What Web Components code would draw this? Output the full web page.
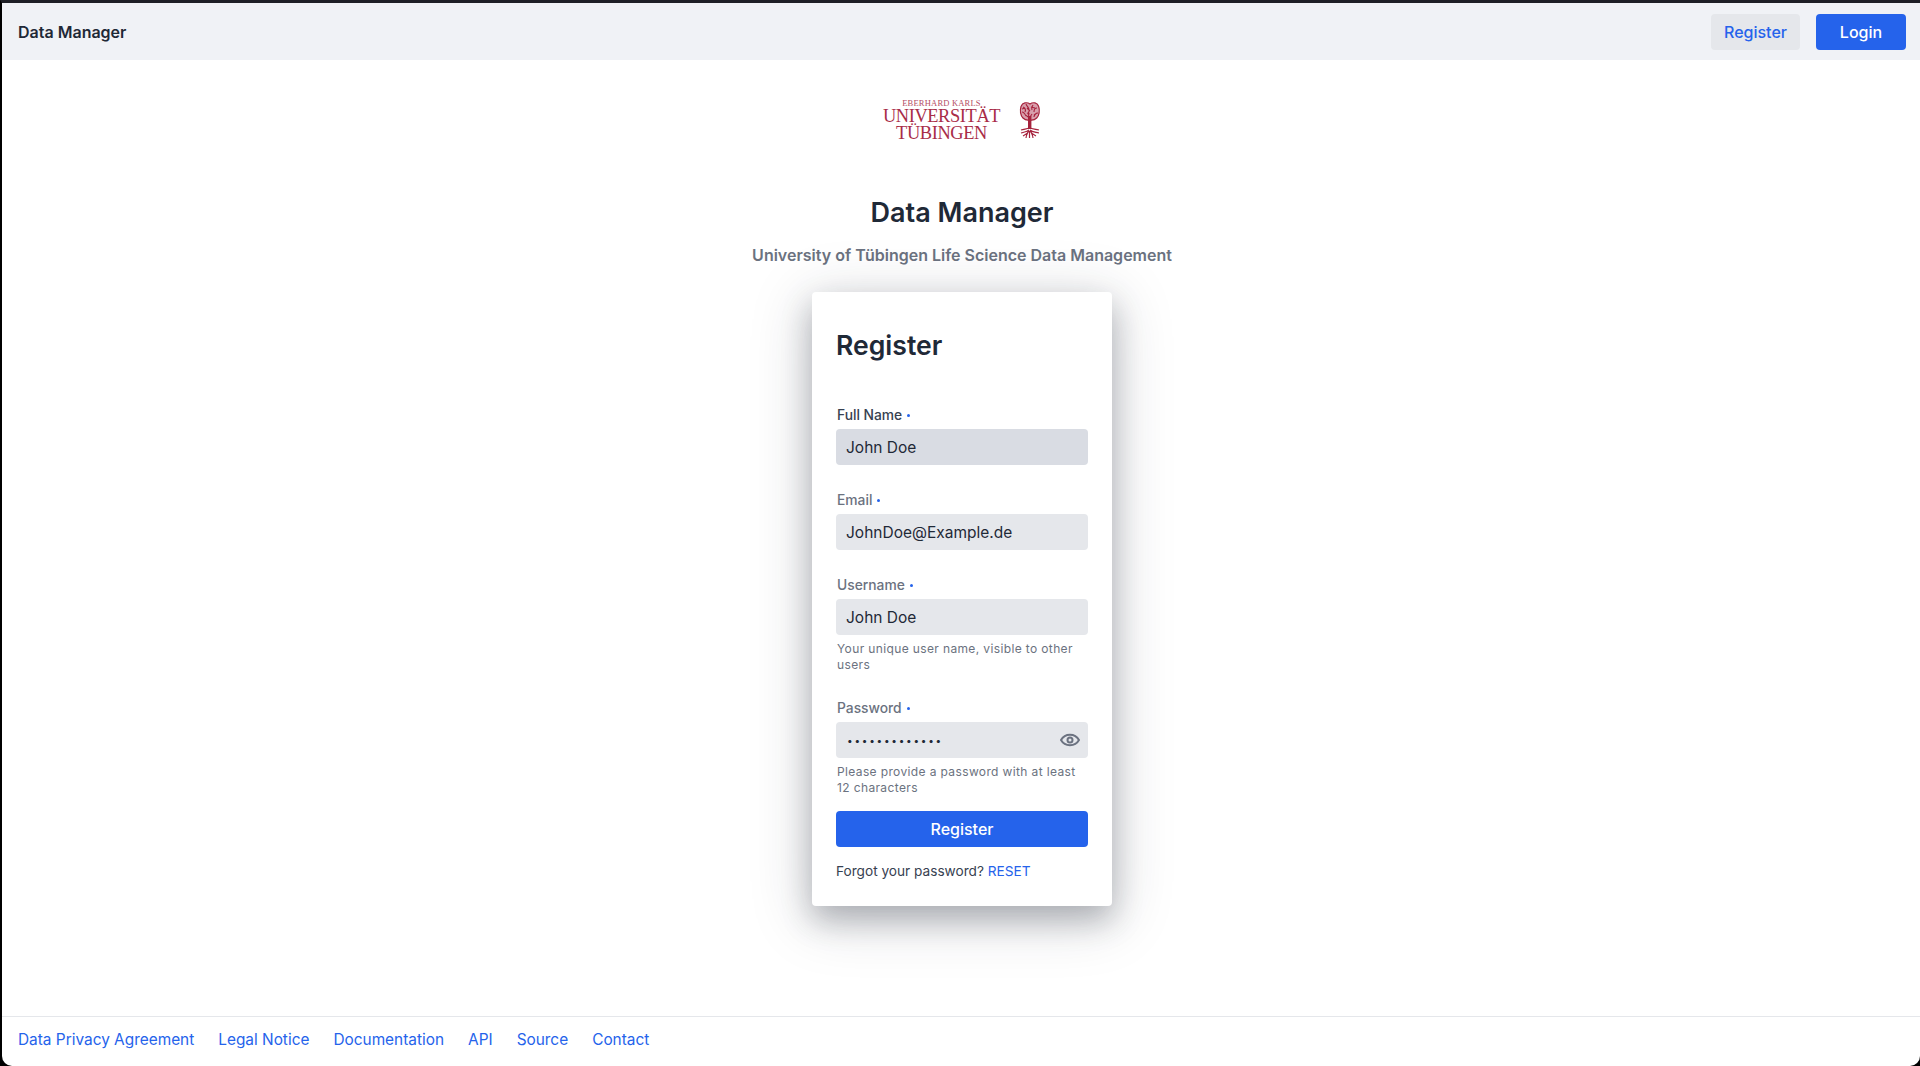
<!DOCTYPE html>
<html lang="en">
<head>
<meta charset="utf-8">
<title>Data Manager</title>
<style>
  html, body { margin: 0; height: 100%; background: #000; }
  body { font-family: Inter, "Liberation Sans", sans-serif; }
</style>
</head>
<body>
<app-shell>
  <top-nav slot="nav"></top-nav>
  <uni-logo></uni-logo>
  <h1-block></h1-block>
  <register-card>
    <form-field label="Full Name" value="John Doe" focused></form-field>
    <form-field label="Email" value="JohnDoe@Example.de"></form-field>
    <form-field label="Username" value="John Doe" help="Your unique user name, visible to other users"></form-field>
    <form-field label="Password" value="•••••••••••••" type="password" help="Please provide a password with at least 12 characters"></form-field>
  </register-card>
  <page-footer slot="footer"></page-footer>
</app-shell>

<script>
class AppShell extends HTMLElement {
  constructor() {
    super();
    this.attachShadow({ mode: 'open' });
    this.shadowRoot.innerHTML = `
      <style>
        :host {
          display: flex;
          flex-direction: column;
          box-sizing: border-box;
          height: 100vh;
          border-top: 3px solid #1e1f26;
          border-left: 2px solid #000;
          background: #000;
        }
        .window {
          flex: 1;
          display: flex;
          flex-direction: column;
          background: #fff;
          border-bottom-left-radius: 10px;
          border-bottom-right-radius: 10px;
          overflow: hidden;
        }
        main {
          flex: 1;
          display: flex;
          flex-direction: column;
          align-items: center;
          padding-left: 2px;
        }
      </style>
      <div class="window">
        <slot name="nav"></slot>
        <main><slot></slot></main>
        <slot name="footer"></slot>
      </div>
    `;
  }
}

class TopNav extends HTMLElement {
  constructor() {
    super();
    this.attachShadow({ mode: 'open' });
    this.shadowRoot.innerHTML = `
      <style>
        :host {
          display: flex;
          align-items: center;
          justify-content: space-between;
          height: 57px;
          padding: 0 14px 0 16px;
          background: #f0f2f6;
        }
        .brand { font-size: 16px; font-weight: 600; color: #1f2937; }
        .actions { display: flex; gap: 16px; }
        .btn {
          display: flex;
          align-items: center;
          justify-content: center;
          height: 36px;
          border-radius: 4px;
          font-size: 16px;
          font-weight: 500;
        }
        .ghost { width: 89px; background: #e5e7eb; color: #2563eb; }
        .solid { width: 90px; background: #2563eb; color: #fff; }
      </style>
      <span class="brand">Data Manager</span>
      <div class="actions">
        <span class="btn ghost">Register</span>
        <span class="btn solid">Login</span>
      </div>
    `;
  }
}

class UniLogo extends HTMLElement {
  constructor() {
    super();
    this.attachShadow({ mode: 'open' });
    this.shadowRoot.innerHTML = `
      <style>
        :host {
          display: flex;
          align-items: center;
          gap: 19px;
          height: 48px;
          margin-top: 36px;
          color: #a82c47;
          font-family: "Liberation Serif", serif;
        }
        .words { display: flex; flex-direction: column; align-items: center; width: 116px; }
        .small { font-size: 8.500px; line-height: 10px; letter-spacing: 0.2px; opacity: 0.85; }
        .big { font-size: 18.400px; line-height: 17px; letter-spacing: -0.4px; }
        svg { display: block; }
      </style>
      <div class="words">
        <span class="small">EBERHARD KARLS</span>
        <span class="big">UNIVERSITÄT</span>
        <span class="big">TÜBINGEN</span>
      </div>
      <svg width="22" height="38" viewBox="0 0 22 38" fill="none" stroke="#a6233d">
        <path d="M11 3C8 .8 3.500 1.500 2 5.500c-1.300 4-.5 9 2 11.500 2 2 4.500 2.500 6.700 2 2.300.5 5 0 7-2 2.500-2.500 3.300-7.500 2-11.500C18.500 1.500 14 .8 11 3z" stroke-width="1.200" fill="#d89fac"/>
        <path d="M4 6c2 1 3 3 2 5M7 3c1 3 3 3 3 6M14 4c-1 2-2 3-1 5M18 7c-2 0-3 2-3 4M3 11c2 0 3 2 4 4M19 12c-2 0-4 2-4 4M10 10c-1 2-1 4 0 6M8 7l3 3M6 14c1 0 2 1 3 2M13 13l-2 3M3 8l3-1M12 6l4 1M8 12l3 1M15 14l3-2" stroke-width="1.100"/>
        <path d="M10.700 15v13" stroke-width="3.400"/>
        <path d="M10 27c-2 1-5 1-8 2M11 27c2 1 6 1 9 2M10 29c-2 2-5 2-8 3M11 29c2 2 5 2 9 3M10 30c-1 2-4 4-6 5M11 30c1 2 4 4 6 5M10.500 30v7M9 31c-1 2-2 4-2 6M12 31c1 2 2 4 2 6" stroke-width="1.200"/>
      </svg>
    `;
  }
}

class H1Block extends HTMLElement {
  constructor() {
    super();
    this.attachShadow({ mode: 'open' });
    this.shadowRoot.innerHTML = `
      <style>
        :host { display: block; margin-top: 51px; text-align: center; }
        h1 { margin: 0; font-size: 27px; line-height: 36px; font-weight: 600; color: #1f2937; }
        p { margin: 12px 0 0; font-size: 16px; line-height: 24px; font-weight: 600; color: #6b7280; }
      </style>
      <h1>Data Manager</h1>
      <p>University of Tübingen Life Science Data Management</p>
    `;
  }
}

class RegisterCard extends HTMLElement {
  constructor() {
    super();
    this.attachShadow({ mode: 'open' });
    this.shadowRoot.innerHTML = `
      <style>
        :host {
          display: block;
          box-sizing: border-box;
          width: 300px;
          margin-top: 25px;
          padding: 24px 24px 25px;
          background: #fff;
          border-radius: 4px;
          box-shadow: 0 14px 30px rgba(31, 41, 55, 0.28), 0 10px 60px 4px rgba(31, 41, 55, 0.18);
        }
        h2 { margin: 0 0 31px; font-size: 26.600px; line-height: 58px; font-weight: 600; color: #1f2937; }
        .fields { display: flex; flex-direction: column; }
        button {
          display: block;
          width: 100%;
          height: 36px;
          margin-top: 15px;
          border: 0;
          border-radius: 4px;
          background: #2563eb;
          color: #fff;
          font: 500 16px Inter, "Liberation Sans", sans-serif;
        }
        p { margin: 14px 0 0; font-size: 13.650px; line-height: 20px; color: #374151; }
        a { color: #2563eb; text-decoration: none; }
      </style>
      <h2>Register</h2>
      <div class="fields"><slot></slot></div>
      <button type="button">Register</button>
      <p>Forgot your password? <a href="#">RESET</a></p>
    `;
  }
}

class FormField extends HTMLElement {
  constructor() {
    super();
    this.attachShadow({ mode: 'open' });
  }

  connectedCallback() {
    const help = this.getAttribute('help');
    const isPassword = this.getAttribute('type') === 'password';
    const focused = this.hasAttribute('focused');
    this.shadowRoot.innerHTML = `
      <style>
        :host { display: block; margin-bottom: 25px; }
        :host(:last-child) { margin-bottom: 0; }
        label {
          display: flex;
          align-items: center;
          height: 20px;
          margin: 0 1px 4px;
          font-size: 13.800px;
          font-weight: 500;
          color: ${focused ? '#374151' : '#6b7280'};
        }
        label i {
          width: 3px;
          height: 3px;
          margin-left: 5px;
          border-radius: 50%;
          background: #2563eb;
        }
        .box {
          display: flex;
          align-items: center;
          justify-content: space-between;
          height: 36px;
          padding: 0 6px 0 10px;
          border-radius: 4px;
          background: ${focused ? '#d9dce3' : '#e5e7eb'};
          font-size: 15.500px;
          color: #1f2937;
        }
        .dots { font-size: 10px; letter-spacing: 1.750px; margin-left: 1px; }
        svg { display: block; }
        small {
          display: block;
          margin: 6px 0 0 1px;
          font-size: 12px;
          line-height: 16px;
          letter-spacing: 0.37px;
          color: #6b7280;
        }
      </style>
      <label>${this.getAttribute('label')}<i></i></label>
      <div class="box">
        <span class="${isPassword ? 'dots' : ''}">${this.getAttribute('value')}</span>
        ${isPassword ? `<svg width="24" height="24" viewBox="0 0 24 24" fill="none" stroke="#6b7280" stroke-width="2" stroke-linecap="round" stroke-linejoin="round">
          <path d="M3 12C5 8.500 8 6.800 12 6.800s7 1.700 9 5.200c-2 3.500-5 5.200-9 5.200S5 15.500 3 12z"/>
          <circle cx="12" cy="12" r="2.500"/>
        </svg>` : ''}
      </div>
      ${help ? `<small>${help}</small>` : ''}
    `;
  }
}

class PageFooter extends HTMLElement {
  constructor() {
    super();
    this.attachShadow({ mode: 'open' });
    const links = ['Data Privacy Agreement', 'Legal Notice', 'Documentation', 'API', 'Source', 'Contact'];
    this.shadowRoot.innerHTML = `
      <style>
        :host {
          display: flex;
          align-items: center;
          gap: 24px;
          height: 44px;
          padding: 0 16px 5px;
          border-top: 1px solid #e5e7eb;
        }
        a { font-size: 15.400px; color: #2563eb; text-decoration: none; }
      </style>
      ${links.map(l => `<a href="#">${l}</a>`).join('')}
    `;
  }
}

customElements.define('app-shell', AppShell);
customElements.define('top-nav', TopNav);
customElements.define('uni-logo', UniLogo);
customElements.define('h1-block', H1Block);
customElements.define('register-card', RegisterCard);
customElements.define('form-field', FormField);
customElements.define('page-footer', PageFooter);
</script>
</body>
</html>
